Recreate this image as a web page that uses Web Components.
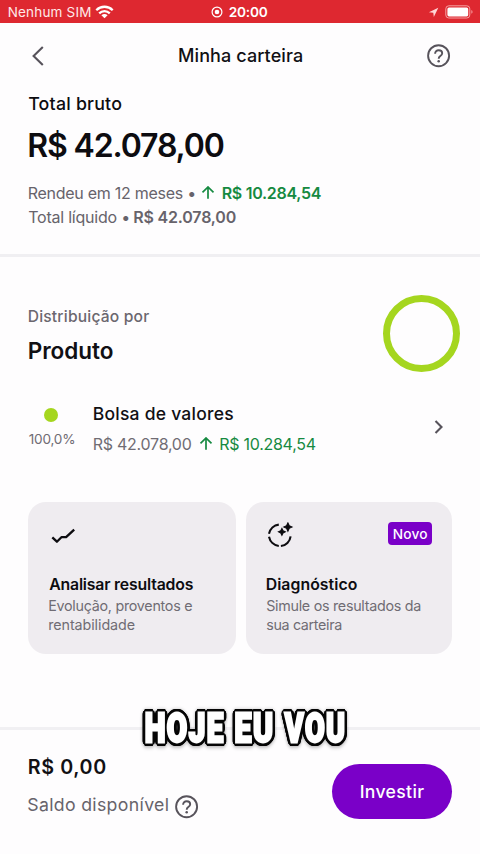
<!DOCTYPE html>
<html lang="pt-BR">
<head>
<meta charset="utf-8">
<title>Minha carteira</title>
<style>
html,body{margin:0;padding:0;background:#fefdfe}
body{width:480px;height:854px;overflow:hidden;font-family:Inter,"Liberation Sans",sans-serif;color:#111014}
</style>
</head>
<body>
<wallet-app></wallet-app>
<script>
const pen = document.createElement('canvas').getContext('2d');

/* Single line of text whose tracking is set so that its ink fills the given width. */
class UiText extends HTMLElement {
  connectedCallback() {
    const size = +this.getAttribute('size'), weight = this.getAttribute('weight') || 400;
    const line = this.getAttribute('line') || 24, w = +this.getAttribute('w');
    const text = this.textContent, face = this.getAttribute('face') || 'Inter';
    pen.font = `${weight} ${size}px ${face}`;
    const m = pen.measureText(text);
    const ink = m.actualBoundingBoxLeft + m.actualBoundingBoxRight;
    const track = (w - .5 - ink) / (text.length - 1);
    const start = m.actualBoundingBoxLeft + (/^[TSMs]/.test(text) ? .2 : .7);
    this.attachShadow({mode: 'open'}).innerHTML = `<style>
      :host{display:block;flex:none;width:${w}px;height:${line}px;white-space:nowrap;
        font:${weight} ${size}px/${line}px ${face},sans-serif;letter-spacing:${track.toFixed(3)}px;
        text-indent:${start.toFixed(2)}px}
    </style><slot></slot>`;
  }
}
customElements.define('ui-text', UiText);

const ICONS = {
  back: [14, 22, '<path d="M12.800 2 3.600 11 12.800 20" fill="none" stroke="#57535b" stroke-width="2.1"/>'],
  next: [10, 16, '<path d="M1.5 2 7.5 8 1.5 14" fill="none" stroke="#57535b" stroke-width="2.1"/>'],
  help: [24, 24, '<g fill="none" stroke="#57535b" stroke-width="1.9"><circle cx="11.600" cy="11.700" r="10.5"/><path d="M8.100 9.7C8.100 7.5 9.600 6.2 11.700 6.2s3.5 1.2 3.5 3c0 1.5-.9 2.1-1.9 2.8-1 .7-1.6 1.200-1.600 2.700"/></g><circle cx="11.700" cy="17.200" r="1.250" fill="#57535b"/>'],
  up: [14, 14, '<path d="M7 12.700V1.300M1.500 6.400 7 1l5.500 5.400" fill="none" stroke="#168a41" stroke-width="1.700"/>'],
  wifi: [19, 14, '<g fill="none" stroke="#fff" stroke-width="2.300"><path d="M1.300 5.200C6 .6 13 .6 17.700 5.200"/><path d="M4.200 8.300c3-2.900 7.600-2.900 10.600 0"/></g><path d="M9.500 13.300 6.400 10.300c1.700-1.600 4.500-1.600 6.200 0z" fill="#fff"/>'],
  record: [12, 12, '<circle cx="6" cy="6" r="4.900" fill="none" stroke="#fff" stroke-width="1.200"/><circle cx="6" cy="6" r="2.300" fill="#fff"/>'],
  place: [11, 11, '<path d="M10.300.700 5.800 10 5.300 5.700.900 5.200z" fill="#ffd6d6"/>'],
  battery: [29, 14, '<rect x=".8" y=".8" width="24" height="12.200" rx="3" fill="none" stroke="#f6a0a2" stroke-width="1"/><rect x="2.400" y="2.400" width="20.800" height="9" rx="1.600" fill="#fff"/><path d="M26.400 5c1.500.7 1.500 3.100 0 3.800z" fill="#f6a0a2"/>'],
  trend: [26, 16, '<path d="m2.300 9.300 4.600 4.400 4.500-4.500h4.700L24.200 1.600" fill="none" stroke="#0d0c10" stroke-width="2.300" stroke-linejoin="round"/>'],
  scan: [28, 26, '<g fill="none" stroke="#0d0c10" stroke-width="2.100"><path d="M12.800 2.600C8 3.200 4 6.900 3 11.800"/><path d="M3 14.800c1 5 5 8.700 9.800 9.200"/><path d="M14.900 24c5-.5 9.100-4.500 9.700-9.700"/></g><path d="m21.900 1 1.300 2.700 2.700 1.300-2.700 1.300-1.300 2.700-1.300-2.700-2.700-1.300 2.700-1.300zM15.900 6.500l1.100 2.200 2.200 1.100-2.200 1.100-1.100 2.200-1.100-2.200-2.200-1.100 2.200-1.100z" fill="#0d0c10" stroke="#0d0c10" stroke-width="1.200"/>']
};
class UiIcon extends HTMLElement {
  connectedCallback() {
    const [w, h, body] = ICONS[this.getAttribute('name')];
    this.attachShadow({mode: 'open'}).innerHTML = `<style>:host{display:block;flex:none;width:${w}px;height:${h}px}svg{display:block}</style>
      <svg width="${w}" height="${h}" viewBox="0 0 ${w} ${h}">${body}</svg>`;
  }
}
customElements.define('ui-icon', UiIcon);

function define(name, html) {
  const t = document.createElement('template');
  t.innerHTML = html;
  customElements.define(name, class extends HTMLElement {
    connectedCallback() {
      if (!this.shadowRoot) this.attachShadow({mode: 'open'}).append(document.importNode(t.content, true));
    }
  });
}

define('status-bar', `<style>
  :host{display:grid;grid-template-columns:211px 1fr auto;height:23px;background:#de2830;color:#fff;box-sizing:border-box;padding:0 6px 0 8px}
  div{display:flex;align-items:center;height:24px}
  .c{margin-left:-8px}
</style>
<div style="gap:5px"><ui-text size="13.5" w="82" style="color:#ffe9e9">Nenhum SIM</ui-text><ui-icon name="wifi"></ui-icon></div>
<div class="c" style="gap:5px"><ui-icon name="record"></ui-icon><ui-text size="13.7" weight="600" w="39.500">20:00</ui-text></div>
<div style="gap:6px"><ui-icon name="place"></ui-icon><ui-icon name="battery"></ui-icon></div>`);

define('page-header', `<style>
  :host{display:grid;grid-template-columns:1fr auto 1fr;align-items:center;height:65px;padding:0 29px 0 30px}
  .r{justify-self:end}
</style>
<ui-icon name="back"></ui-icon><ui-text size="18" weight="540" w="123.500">Minha carteira</ui-text><ui-icon class="r" name="help"></ui-icon>`);

define('portfolio-summary', `<style>
  :host{display:block;box-sizing:border-box;height:169px;padding:4px 28px 0;border-bottom:3px solid #f0eff2;color:#0d0c10}
  .row{display:flex;align-items:center;height:24px;color:#67636b}
  .g{color:#168a41}
</style>
<ui-text size="17.800" weight="540" w="93.500">Total bruto</ui-text>
<ui-text size="32" weight="560" line="40" w="195" style="margin:10px 0 15px .5px">R$ 42.078,00</ui-text>
<div class="row"><ui-text size="16" w="166">Rendeu em 12 meses •</ui-text><ui-icon name="up" style="margin:0 7px 0 7px"></ui-icon><ui-text class="g" size="16" weight="600" w="98.500">R$ 10.284,54</ui-text></div>
<div class="row" style="gap:5px"><ui-text size="16" w="100.500">Total líquido •</ui-text><ui-text size="16" weight="600" w="102">R$ 42.078,00</ui-text></div>`);

define('distribution-head', `<style>
  :host{display:flex;justify-content:space-between;padding:38px 20px 0 28px}
  .ring{box-sizing:border-box;width:77px;height:77px;border:7px solid #a5d61f;border-radius:50%}
</style>
<div><ui-text size="15.6" weight="500" w="121" style="color:#6b676f;margin:10px 0 8px">Distribuição por</ui-text>
<ui-text size="22.500" weight="560" line="27" w="84.500">Produto</ui-text></div>
<div class="ring"></div>`);

define('product-row', `<style>
  :host{display:flex;align-items:center;height:60px;margin-top:25px;padding:0 36px 0 28px}
  .share{width:65px;height:60px;flex:none}
  .dot{width:14px;height:14px;border-radius:50%;background:#a5d61f;margin:11px 0 5px 16px}
  .main{flex:1;padding-top:3px}
  .row{display:flex;align-items:center;color:#706c74}
</style>
<div class="share"><div class="dot"></div><ui-text size="13.6" w="46" style="color:#706c74">100,0%</ui-text></div>
<div class="main"><ui-text size="17.500" weight="540" w="140">Bolsa de valores</ui-text>
<div class="row" style="margin-top:6px"><ui-text size="16" w="98.500">R$ 42.078,00</ui-text><ui-icon name="up" style="margin:0 7px"></ui-icon><ui-text size="16" w="96" style="color:#168a41">R$ 10.284,54</ui-text></div></div>
<ui-icon name="next"></ui-icon>`);

define('action-card', `<style>
  :host{display:block;box-sizing:border-box;height:152px;border-radius:18px;background:#efecf0;padding:20px 20px 0 20.500px;color:#0d0c10}
  .top{display:flex;justify-content:space-between;align-items:flex-start;height:51px}
  .desc{display:block;color:#706c74}
</style>
<div class="top"><slot name="icon"></slot><slot name="badge"></slot></div><slot name="title"></slot><div class="desc"><slot></slot></div>`);

define('new-badge', `<style>
  :host{display:flex;box-sizing:border-box;width:44px;height:23px;justify-content:center;align-items:center;border-radius:4px;background:#7a00c8;color:#fff}
</style><slot></slot>`);

define('action-cards', `<style>
  :host{display:grid;grid-template-columns:207.500px 206.500px;gap:10px;margin:45px 28px 0}
</style>
<action-card><ui-icon slot="icon" name="trend" style="margin:6px 0 0 1px"></ui-icon>
<ui-text slot="title" size="15.800" weight="580" w="145">Analisar resultados</ui-text>
<ui-text size="14.300" line="18.500" w="143.500">Evolução, proventos e</ui-text><ui-text size="14.300" line="18.500" w="86">rentabilidade</ui-text></action-card>
<action-card><ui-icon slot="icon" name="scan"></ui-icon><new-badge slot="badge"><ui-text size="13.700" weight="500" w="34">Novo</ui-text></new-badge>
<ui-text slot="title" size="15.800" weight="580" w="90.500">Diagnóstico</ui-text>
<ui-text size="14.300" line="18.500" w="154.500">Simule os resultados da</ui-text><ui-text size="14.300" line="18.500" w="75.500">sua carteira</ui-text></action-card>`);

define('balance-footer', `<style>
  :host{display:flex;box-sizing:border-box;justify-content:space-between;height:127px;margin-top:73px;border-top:3px solid #f1f0f3;padding:25px 28px 0}
  .row{display:flex;gap:7px;color:#67636b;margin-top:13px}
  button{display:flex;align-items:center;justify-content:center;width:120px;height:55px;margin:9px 0 0;padding:0;border:0;border-radius:28px;background:#7a00c8;color:#fff}
</style>
<div><ui-text size="19.700" weight="560" w="77">R$ 0,00</ui-text>
<div class="row"><ui-text size="17.700" w="140" style="margin-top:1px">Saldo disponível</ui-text><ui-icon name="help" style="margin-top:3px"></ui-icon></div></div>
<button><ui-text size="17.600" weight="500" w="64">Investir</ui-text></button>`);

/* Subtitle word: heavy face squeezed horizontally to the requested width, ringed by a dark outline.
   The ring has to clear half of the white stroke before it shows. */
customElements.define('caption-word', class extends HTMLElement {
  connectedCallback() {
    const w = +this.getAttribute('w');
    pen.font = '900 40px Roboto';
    const m = pen.measureText(this.textContent);
    const k = w / (m.actualBoundingBoxLeft + m.actualBoundingBoxRight + 3 + 2 * (this.textContent.length - 1));
    const ring = [];
    for (const f of [1, .6]) for (let i = 0; i < 28; i++) {
      const a = i * Math.PI / 14;
      ring.push(`${(f * (1.500 + 2.400 / k) * Math.cos(a)).toFixed(2)}px ${(f * 4 * Math.sin(a)).toFixed(2)}px 0 #060606`);
    }
    this.attachShadow({mode: 'open'}).innerHTML = `<style>
      :host{display:block;width:${w}px;height:44px}
      span{display:inline-block;white-space:nowrap;font:900 40px/44px Roboto,sans-serif;color:#fff;
        text-indent:${m.actualBoundingBoxLeft + 1.5}px;letter-spacing:2px;-webkit-text-stroke:2.800px #fff;stroke-linejoin:round;
        text-shadow:${ring.join(',')};transform:scaleX(${k});transform-origin:0 50%;filter:drop-shadow(0 1px 2px rgba(0,0,0,.35))}
    </style><span><slot></slot></span>`;
  }
});
define('video-caption', `<style>
  :host{position:absolute;left:145px;top:707px;display:flex;gap:11px}
</style><caption-word w="79">HOJE</caption-word><caption-word w="38">EU</caption-word><caption-word w="62" style="margin-left:-1px">VOU</caption-word>`);

define('wallet-app', `<style>:host{display:block;position:relative;width:480px;height:854px;overflow:hidden;background:#fefdfe}</style>
<status-bar></status-bar><page-header></page-header><portfolio-summary></portfolio-summary>
<distribution-head></distribution-head><product-row></product-row><action-cards></action-cards>
<balance-footer></balance-footer><video-caption></video-caption>`);
</script>
</body>
</html>
